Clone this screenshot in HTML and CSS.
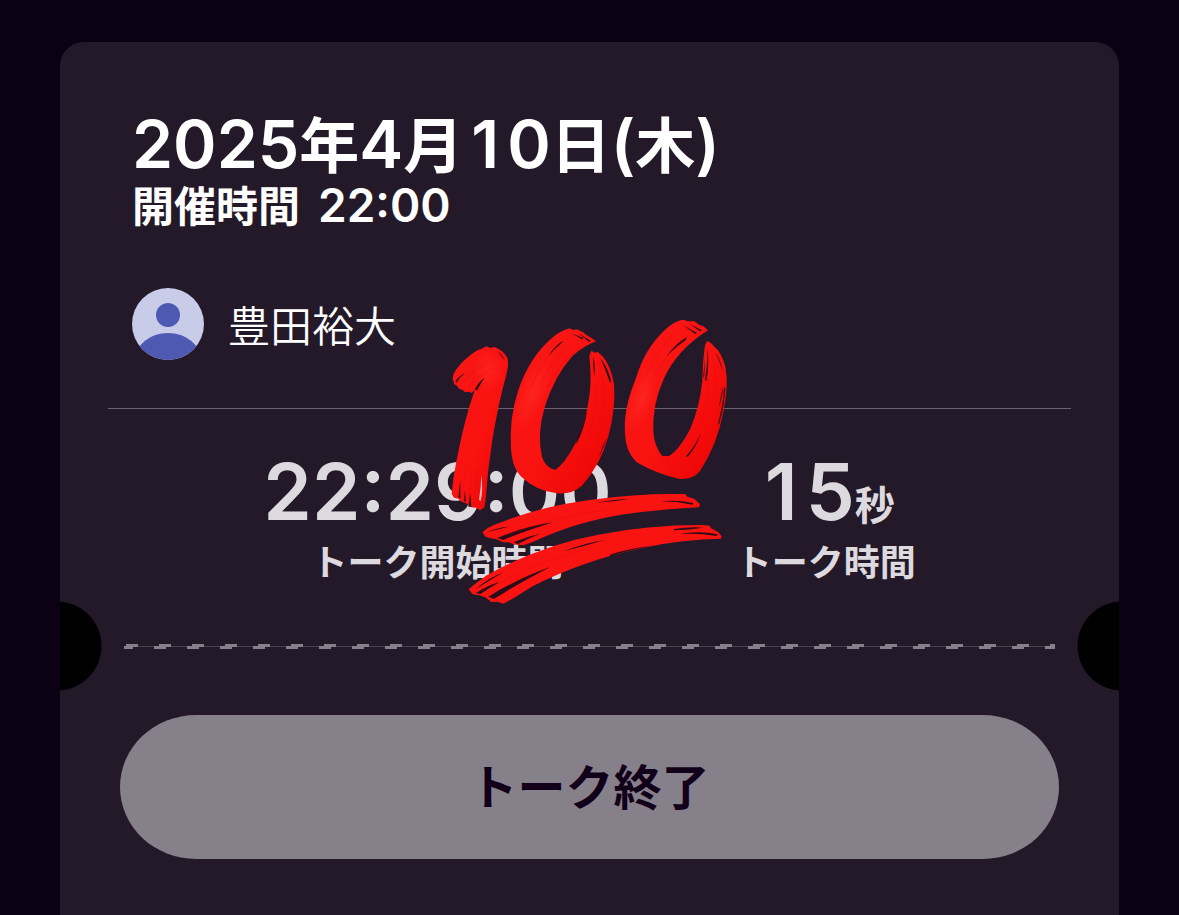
FILE: index.html
```html
<!DOCTYPE html>
<html lang="ja">
<head>
	<meta charset="utf-8">
	<meta name="viewport" content="width=device-width, initial-scale=1.0">
	<title>トーク</title>
	<link rel="stylesheet" href="styles.css">
</head>
<body>

<main class="ticket">

	<header class="event">
		<h1 class="date"><span class="num">2025</span>年<span class="num">4</span>月<span class="num"><span class="one">1</span>0</span>日<span class="num">(</span>木<span class="num">)</span></h1>
		<p class="open">開催時間<span class="num">22:00</span></p>
		<div class="member">
			<svg class="avatar" viewBox="0 0 72 72" aria-hidden="true">
				<clipPath id="round"><circle cx="36" cy="36" r="36"/></clipPath>
				<g clip-path="url(#round)">
					<rect width="72" height="72" fill="#c9cce8"/>
					<circle cx="36" cy="27" r="12" fill="#4e5ab1"/>
					<ellipse cx="36" cy="72" rx="33" ry="27" fill="#4e5ab1"/>
				</g>
			</svg>
			<span class="name">豊田裕大</span>
		</div>
	</header>

	<section class="times">
		<div class="time">
			<p class="value"><span class="num">22:29:00</span></p>
			<p class="label">トーク開始時間</p>
		</div>
		<div class="time">
			<p class="value"><span class="num"><span class="one">1</span>5</span><span class="unit">秒</span></p>
			<p class="label">トーク時間</p>
		</div>
	</section>

	<div class="tear">
		<span class="notch notch_left"></span>
		<span class="dashes"></span>
		<span class="notch notch_right"></span>
	</div>

	<div class="actions">
		<button type="button" class="finish">トーク終了</button>
	</div>

	<!-- stamp over the ticket -->
	<svg class="stamp" viewBox="0 0 900 900" role="img" aria-label="100">
		<defs>
			<linearGradient id="red" x1="0" y1="0" x2="1" y2="1">
				<stop offset="0" stop-color="#f81816"/>
				<stop offset="0.55" stop-color="#f91210"/>
				<stop offset="1" stop-color="#ea0202"/>
			</linearGradient>
			<radialGradient id="glow">
				<stop offset="0" stop-color="#ff2a25" stop-opacity="0.7"/>
				<stop offset="1" stop-color="#ff2a24" stop-opacity="0"/>
			</radialGradient>
		</defs>
		<g fill="url(#red)">
			<path d="M38 207 Q38 192 52 174 Q76 143 112 121 L124 117 L139 109 L151 114 L164 111 Q190 121 202 143 Q207 164 200 190 Q174 286 157 390 Q143 480 137 568 L133 592 L120 601 L108 593 L94 592 L78 580 L65 575 L55 566 L42 563 L35 551 Q39 500 50 450 Q71 337 104 240 L95 249 L87 245 L76 247 L67 239 L58 237 L49 226 L43 223 Z"/>
			<path d="M468 94 L453 83 L440 76 L428 66 L410 58 L398 60 L389 55 Q361 62 335 85 Q270 140 235 240 Q207 325 213 415 Q217 476 244 500 Q286 541 350 550 Q393 555 425 528 Q482 465 506 376 Q528 290 522 222 Q513 169 489 140 L473 126 L464 128 L454 122 L448 138 Q455 200 449 252 Q438 340 405 402 Q374 462 345 480 Q318 474 306 442 Q290 370 314 292 Q342 199 398 137 Q430 109 468 94 Z"/>
			<path d="M804 61 L790 49 L777 44 L763 34 L744 34 L729 29 Q700 33 669 65 Q613 119 587 207 Q549 300 555 370 Q556 425 590 457 Q650 492 719 507 Q758 510 780 483 Q832 403 850 305 Q867 226 856 170 Q844 126 824 111 L812 98 L801 93 L795 106 Q787 166 787 213 Q780 286 752 354 Q718 421 685 439 L666 437 Q643 408 640 366 Q636 285 671 207 Q712 118 804 61 Z"/>
			<path d="M127 667 L142 655 L160 646 Q300 588 455 569 Q590 551 710 552 L735 552 L742 560 L762 566 L780 582 L777 592 Q660 598 564 611 Q410 633 278 696 L250 706 L220 703 L207 697 L190 697 L170 688 L149 684 L137 680 Z"/>
			<path d="M86 838 L105 822 L138 797 Q300 706 475 674 Q620 645 785 645 L810 647 L812 654 L835 667 L845 679 L843 686 Q730 687 610 713 Q430 751 279 828 L220 865 L190 881 L173 875 L154 876 L136 862 L118 856 L98 853 Z"/>
		</g>
		<g fill="url(#glow)">
			<ellipse cx="278" cy="250" rx="42" ry="120" transform="rotate(22 278 250)"/>
			<ellipse cx="605" cy="265" rx="38" ry="110" transform="rotate(18 605 265)"/>
			<ellipse cx="145" cy="180" rx="48" ry="60"/>
		</g>
		<!-- bristle gaps -->
		<g fill="#2a0d18">
			<path d="M46 214 Q58 197 76 190 Q58 202 50 218 Z"/>
			<path d="M104 239 Q116 215 133 203 Q120 224 111 241 Z"/>
			<path d="M173 122 Q188 134 196 153 Q184 139 173 122 Z"/>
			<path d="M326 137 Q343 108 369 92 L365 98 Q347 113 326 137 Z"/>
			<path d="M394 70 L430 84 L427 88 Z"/>
			<path d="M414 68 L453 94 L447 96 Z"/>
			<path d="M481 144 Q506 176 514 216 L510 218 Q498 182 481 144 Z"/>
			<path d="M460 139 Q466 166 463 199 Q458 170 460 139 Z"/>
			<path d="M442 300 Q434 355 411 398 L408 399 Q426 354 442 300 Z"/>
			<path d="M429 350 Q418 382 404 404 Q414 378 429 350 Z"/>
			<path d="M500 385 Q488 421 477 440 Q486 410 500 385 Z"/>
			<path d="M680 139 Q704 102 741 81 L737 91 Q710 109 680 139 Z"/>
			<path d="M728 45 L771 69 L766 72 Z"/>
			<path d="M750 43 L786 61 L780 64 Z"/>
			<path d="M802 115 Q809 163 799 213 L795 211 Q803 160 802 115 Z"/>
			<path d="M795 145 L793 196 L789 205 Z"/>
			<path d="M824 126 Q845 151 848 185 Q840 151 824 126 Z"/>
			<path d="M856 232 Q852 301 836 345 L834 340 Q849 287 852 235 Z"/>
			<path d="M850 225 Q847 265 837 290 Q842 260 850 225 Z"/>
			<path d="M783 370 Q766 418 741 442 L739 438 Q763 412 783 370 Z"/>
			<path d="M141 666 Q174 652 206 650 Q170 659 141 666 Z"/>
			<path d="M172 684 Q250 650 340 637 Q258 662 190 690 Z"/>
			<path d="M220 697 Q258 680 300 671 Q260 688 234 702 Z"/>
			<path d="M470 578 Q523 568 568 567 Q520 575 470 578 Z"/>
			<path d="M662 574 Q710 568 760 579 L758 584 Q711 574 662 574 Z"/>
			<path d="M108 837 Q145 804 190 787 Q148 812 108 837 Z"/>
			<path d="M145 860 Q228 808 330 771 Q241 817 162 867 Z"/>
			<path d="M108 849 Q147 824 178 816 Q145 836 120 853 Z"/>
			<path d="M371 724 Q430 700 493 690 Q430 709 371 724 Z"/>
			<path d="M510 738 Q576 718 634 707 Q570 714 510 734 Z"/>
			<path d="M702 657 Q750 650 789 653 Q750 659 702 661 Z"/>
			<path d="M719 672 Q780 661 832 673 L831 678 Q776 669 719 672 Z"/>
			<path d="M85 590 L91 550 L94 590 Z"/>
			<path d="M55 562 L61 510 L61 565 Z"/>
			<path d="M72 574 L75 540 L77 575 Z"/>
		</g>
		<path d="M124 495 Q130 540 122 573 L117 569 Q123 535 124 495 Z" fill="#f2b9bb"/>
		<g fill="none" stroke="#d00a0d" stroke-width="2" opacity="0.4">
			<path d="M85 232 Q115 190 160 175M66 220 Q99 182 140 160M79 470 L66 560M97 480 L86 570M112 480 L103 585"/>
			<path d="M270 240 Q305 145 360 104M300 225 Q334 150 395 106M320 235 Q355 165 420 112"/>
			<path d="M612 210 Q650 115 710 66M645 195 Q680 125 745 78M477 160 Q500 240 485 330M467 220 Q473 300 445 370"/>
			<path d="M815 130 Q834 200 820 280M805 210 Q805 280 778 350M200 675 Q360 615 510 598M150 835 Q300 750 440 716"/>
		</g>
	</svg>

</main>

</body>
</html>
```
FILE: styles.css
```css
* {
	box-sizing: border-box;
	margin: 0;
	padding: 0;
}

body {
	background-color: #0c0014;
	color: #fff;
	font-family: "Noto Sans CJK JP", sans-serif;
	padding: 42px 60px 0;
}

.ticket {
	position: relative;
	min-height: calc(100vh - 42px);
	background-color: #241929;
	border-radius: 24px 24px 0 0;
}

/* latin figures are drawn wider than the kana */
.num {
	font-family: Inter, sans-serif;
	font-weight: 600;
	line-height: 1;
}
.one {
	padding: 0 8px;
}

.event {
	margin: 0 48px;
	padding: 62px 24px 48px;
	border-bottom: 1px solid #6a626d;
}
.date {
	font-size: 60px;
	font-weight: 700;
	line-height: 76px;
}
.date .num {
	font-size: 66px;
}
.open {
	font-size: 42px;
	font-weight: 700;
	line-height: 48px;
}
.open .num {
	font-size: 46px;
	margin-left: 18px;
}
.member {
	display: flex;
	align-items: center;
	gap: 24px;
	margin-top: 60px;
}
.avatar {
	width: 72px;
	height: 72px;
}
.name {
	font-size: 42px;
	font-weight: 350;
	line-height: 72px;
}

.times {
	display: flex;
	justify-content: center;
	gap: 124px;
	padding: 38px 0 18px;
	color: #dcdade;
	text-align: center;
}
.value {
	display: flex;
	align-items: baseline;
	justify-content: center;
}
.value .num {
	font-size: 78px;
	line-height: 90px;
}
.unit {
	font-size: 40px;
	font-weight: 700;
	line-height: 48px;
}
.label {
	font-size: 36px;
	font-weight: 700;
	line-height: 46px;
}

.tear {
	display: flex;
	align-items: center;
	justify-content: space-between;
}
.notch {
	width: 42px;
	height: 90px;
}
.notch_left {
	background: radial-gradient(circle at -3px 50%, #000 44px, transparent 45px);
}
.notch_right {
	background: radial-gradient(circle at 45px 50%, #000 44px, transparent 45px);
}
.dashes {
	flex: 1;
	height: 5px;
	margin: 0 22px;
	background:
		linear-gradient(90deg, #86808a 12px, transparent 12px) 2px 0 / 33px 3px repeat-x,
		linear-gradient(90deg, #86808a 12px, transparent 12px) -3px 2px / 33px 3px repeat-x,
		linear-gradient(#4a414e, #4a414e) 0 2px / 100% 1px no-repeat;
}

.actions {
	padding: 24px 60px 56px;
}
.finish {
	display: block;
	width: 100%;
	height: 144px;
	padding-bottom: 6px;
	border: none;
	border-radius: 76px / 72px;
	background-color: #86808a;
	color: #12001a;
	font-family: inherit;
	font-size: 48px;
	font-weight: 700;
	cursor: pointer;
}

.stamp {
	position: absolute;
	left: calc(50% - 150px);
	top: 268px;
	width: 300px;
	height: 300px;
	pointer-events: none;
}
```
